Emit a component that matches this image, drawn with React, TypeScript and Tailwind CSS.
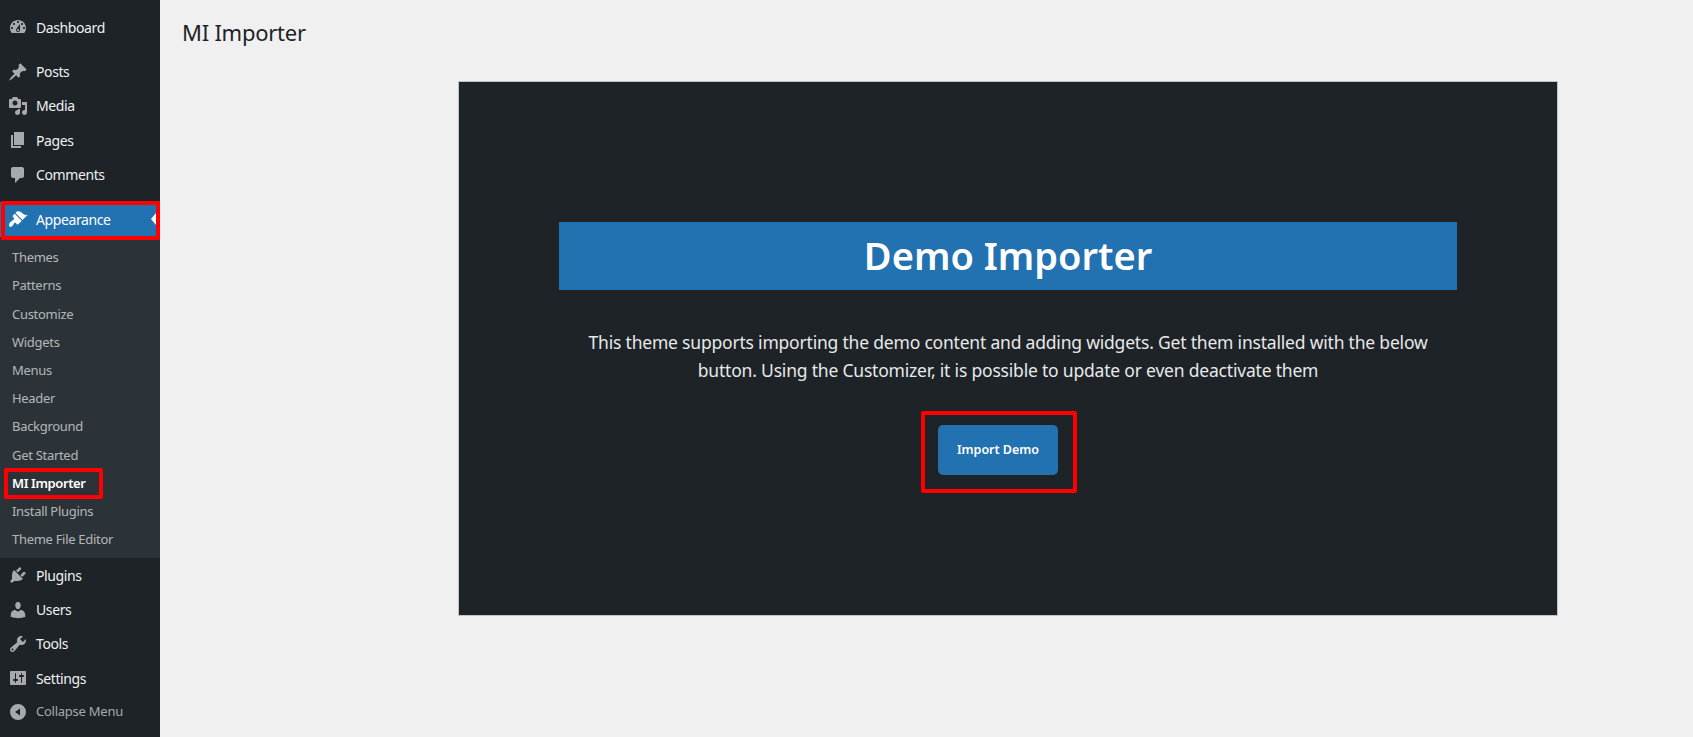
const icons: Record<string, string> = {
  dashboard:
    'M3.76 16h12.48c1.1-1.37 1.76-3.11 1.76-5 0-4.42-3.58-8-8-8s-8 3.58-8 8c0 1.89.66 3.63 1.76 5zM10 4c.55 0 1 .45 1 1s-.45 1-1 1-1-.45-1-1 .45-1 1-1zM6 6c.55 0 1 .45 1 1s-.45 1-1 1-1-.45-1-1 .45-1 1-1zm8 0c.55 0 1 .45 1 1s-.45 1-1 1-1-.45-1-1 .45-1 1-1zm-5.37 5.55L12 7v6c0 1.1-.9 2-2 2s-2-.9-2-2c0-.57.24-1.08.63-1.45zM4 10c.55 0 1 .45 1 1s-.45 1-1 1-1-.45-1-1 .45-1 1-1zm12 0c.55 0 1 .45 1 1s-.45 1-1 1-1-.45-1-1 .45-1 1-1zm-5 3c0-.55-.45-1-1-1s-1 .45-1 1 .45 1 1 1 1-.45 1-1z',
  pin: 'M10.44 3.02l1.82-1.82 6.36 6.35-1.83 1.82c-1.05-.68-2.48-.57-3.41.36l-.75.75c-.92.93-1.04 2.35-.35 3.41l-1.83 1.82-2.41-2.41-2.8 2.79c-.42.42-3.38 2.71-3.8 2.29s1.86-3.39 2.28-3.81l2.79-2.79L4.1 9.36l1.83-1.82c1.05.69 2.48.57 3.4-.36l.75-.75c.93-.92 1.05-2.35.36-3.41z',
  media:
    'M13 11V4c0-.55-.45-1-1-1h-1.67L9 1H5L3.67 3H2c-.55 0-1 .45-1 1v7c0 .55.45 1 1 1h10c.55 0 1-.45 1-1zM7 4.5c1.38 0 2.5 1.12 2.5 2.5S8.38 9.5 7 9.5 4.5 8.38 4.5 7 5.62 4.5 7 4.5zM14 6h5v10.5c0 1.38-1.12 2.5-2.5 2.5S14 17.88 14 16.5s1.12-2.5 2.5-2.5c.17 0 .34.02.5.05V9h-3V6zm-4 8.05V13h2v3.5c0 1.38-1.12 2.5-2.5 2.5S7 17.88 7 16.5 8.12 14 9.5 14c.17 0 .34.02.5.05z',
  pages: 'M6 15V2h10v13H6zm-1 1h8v2H3V5h2v11z',
  comment: 'M5 2h9c1.1 0 2 .9 2 2v7c0 1.1-.9 2-2 2h-2l-5 5v-5H5c-1.1 0-2-.9-2-2V4c0-1.1.9-2 2-2z',
  brush:
    'M14.48 11.06L7.41 3.99l1.5-1.5c.5-.56 2.3-.47 3.51.32 1.21.8 1.43 1.28 2.91 2.1 1.18.64 2.45 1.26 4.45.85zm-.71.71L6.7 4.7 4.93 6.47c-.39.39-.39 1.02 0 1.41l1.06 1.06c.39.39.39 1.03 0 1.42-.6.6-1.43 1.11-2.21 1.69-.35.26-.7.53-1.01.84C1.43 13.23.5 15.76 1.5 17.5c.5.87 1.63.56 2.35-.16.56-.56 1.08-1.39 1.69-2.21.27-.36.55-.71.84-1.01.4-.39 1.03-.39 1.42 0l1.06 1.06c.39.39 1.02.39 1.41 0z',
  plugin:
    'M13.11 4.36L9.87 7.6 8 5.73l3.24-3.24c.35-.34 1.05-.2 1.56.32.52.51.66 1.21.31 1.55zm-8 1.77l.91-1.12 9.01 9.01-1.19.84c-.71.71-2.63 1.16-3.82 1.16H6.14L4.9 17.26c-.59.59-1.54.59-2.12 0-.59-.58-.59-1.53 0-2.12l1.24-1.24v-3.88c0-1.13.4-3.19 1.09-3.89zm7.26 3.97l3.24-3.24c.34-.35 1.04-.21 1.55.31.52.51.66 1.21.31 1.55l-3.24 3.25z',
  user: 'M10 9.25c-2.27 0-2.73-3.44-2.73-3.44C7 4.02 7.82 2 9.97 2c2.16 0 2.98 2.02 2.71 3.81 0 0-.41 3.44-2.68 3.44zm0 2.57L12.72 10c2.39 0 4.52 2.33 4.52 4.53v2.49s-3.65 1.13-7.24 1.13c-3.65 0-7.24-1.13-7.24-1.13v-2.49c0-2.25 1.94-4.48 4.47-4.48z',
  tools:
    'M16.68 9.77c-1.34 1.34-3.3 1.67-4.95.99l-5.41 6.52c-.99.99-2.59.99-3.58 0s-.99-2.59 0-3.57l6.52-5.42c-.68-1.65-.35-3.61.99-4.95 1.28-1.28 3.12-1.62 4.72-1.06l-2.89 2.89 2.82 2.82 2.86-2.87c.53 1.58.18 3.39-1.08 4.65zM3.81 16.21c.4.39 1.04.39 1.43 0 .4-.4.4-1.04 0-1.43-.39-.4-1.03-.4-1.43 0-.39.39-.39 1.03 0 1.43z',
  settings:
    'M18 16V4c0-.55-.45-1-1-1H3c-.55 0-1 .45-1 1v12c0 .55.45 1 1 1h14c.55 0 1-.45 1-1zM8 11h1c.55 0 1 .45 1 1s-.45 1-1 1H8v1.5c0 .28-.22.5-.5.5s-.5-.22-.5-.5V13H6c-.55 0-1-.45-1-1s.45-1 1-1h1V5.5c0-.28.22-.5.5-.5s.5.22.5.5V11zm5-2h-1c-.55 0-1-.45-1-1s.45-1 1-1h1V5.5c0-.28.22-.5.5-.5s.5.22.5.5V7h1c.55 0 1 .45 1 1s-.45 1-1 1h-1v5.5c0 .28-.22.5-.5.5s-.5-.22-.5-.5V9z',
  collapse: 'M10 2a8 8 0 1 1 0 16 8 8 0 0 1 0-16zM12 6.5 7 10l5 3.5z',
};

function Icon({ name, className }: { name: string; className: string }) {
  return (
    <svg viewBox="0 0 20 20" className={`h-5 w-5 fill-current ${className}`}>
      <path fillRule="evenodd" d={icons[name]} />
    </svg>
  );
}

function MenuItem({ icon, label }: { icon: string; label: string }) {
  return (
    <div className="flex h-[34.4px] items-center text-[14px] tracking-[-0.4px] text-[#f0f0f1]">
      <div className="w-9 pl-2">
        <Icon name={icon} className="text-[#a7aaad]" />
      </div>
      <span>{label}</span>
    </div>
  );
}

const subItems = [
  'Themes',
  'Patterns',
  'Customize',
  'Widgets',
  'Menus',
  'Header',
  'Background',
  'Get Started',
  'MI Importer',
  'Install Plugins',
  'Theme File Editor',
];

export default function App() {
  return (
    <div className="flex min-h-[737px] bg-[#f0f0f1] font-['Noto_Sans',sans-serif]">
      <aside className="w-40 shrink-0 bg-[#1d2327] pt-[10px]">
        <MenuItem icon="dashboard" label="Dashboard" />
        <div className="mt-[10px]">
          <MenuItem icon="pin" label="Posts" />
          <MenuItem icon="media" label="Media" />
          <MenuItem icon="pages" label="Pages" />
          <MenuItem icon="comment" label="Comments" />
        </div>

        {/* Current section */}
        <div className="relative mt-[10px] flex h-[35px] items-center bg-[#2271b1] text-[14px] tracking-[-0.4px] text-white">
          <div className="w-9 pl-2">
            <Icon name="brush" className="text-white" />
          </div>
          <span>Appearance</span>
          <div className="absolute right-[4px] top-1/2 h-0 w-0 -translate-y-1/2 border-y-[6px] border-r-[5px] border-y-transparent border-r-white" />
          <div className="absolute -top-[1px] -bottom-[3px] left-[1px] right-0 border-4 border-[#ff0000]" />
        </div>

        <ul className="bg-[#2c3338] pb-[4px] pt-[7px] text-[13px] tracking-[-0.3px] text-[#f0f0f1b3]">
          {subItems.map((item) => (
            <li key={item} className="relative flex h-[28.2px] items-center pl-3">
              {item === 'MI Importer' ? (
                <>
                  <span className="font-semibold tracking-[-0.4px] text-white">{item}</span>
                  <div className="absolute -top-[1px] bottom-[-1px] left-1 w-[99px] rounded-[2px] border-4 border-[#ff0000]" />
                </>
              ) : (
                item
              )}
            </li>
          ))}
        </ul>

        <MenuItem icon="plugin" label="Plugins" />
        <MenuItem icon="user" label="Users" />
        <MenuItem icon="tools" label="Tools" />
        <MenuItem icon="settings" label="Settings" />
        <div className="flex h-[32px] items-center text-[13px] tracking-[-0.25px] text-[#a7aaad]">
          <div className="w-9 pl-2">
            <Icon name="collapse" className="text-[#a7aaad]" />
          </div>
          <span>Collapse Menu</span>
        </div>
      </aside>

      <main className="flex-1 pl-[22px] pt-[16px]">
        <h1 className="text-[22px] leading-[32px] tracking-[-0.25px] text-[#1d2327]">MI Importer</h1>
        <section className="ml-[276px] mt-[33px] flex h-[535px] w-[1100px] flex-col items-center border border-[#c3c4c7] bg-[#1d2327] pt-[140px]">
          <h2 className="flex h-[68px] w-[898px] items-center justify-center bg-[#2271b1] pb-[1px] text-[38px] font-semibold text-white">
            Demo Importer
          </h2>
          <p className="mt-[39px] w-[860px] text-center text-[17.5px] leading-[27.5px] tracking-[-0.2px] text-[#e8e8e9]">
            This theme supports importing the demo content and adding widgets. Get them installed with the below
            button. Using the Customizer, it is possible to update or even deactivate them
          </p>
          <div className="relative mr-[20px] mt-[41px]">
            <button className="flex h-[50px] w-[120px] items-center justify-center rounded-[5px] bg-[#2271b1] text-[12.5px] font-semibold text-white">
              Import Demo
            </button>
            <div className="absolute -bottom-[18px] -left-[17px] -right-[19px] -top-[14px] rounded-[2px] border-4 border-[#ff0000]" />
          </div>
        </section>
      </main>
    </div>
  );
}
